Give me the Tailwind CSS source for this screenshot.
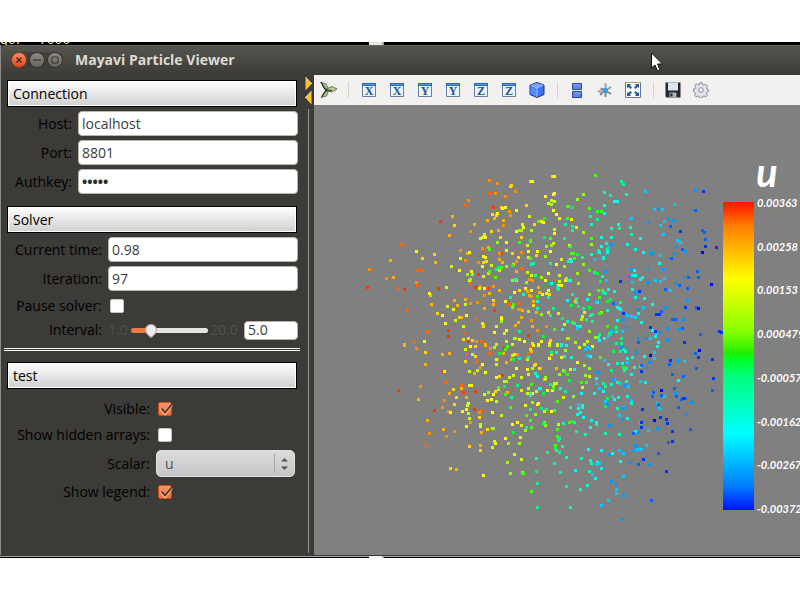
<!DOCTYPE html>
<html lang="en">
<head>
<meta charset="utf-8">
<title>Mayavi Particle Viewer</title>
<script src="https://cdn.jsdelivr.net/npm/@tailwindcss/browser@4"></script>
</head>
<body class="flex h-screen flex-col overflow-hidden bg-white py-[42px] font-['Open_Sans','Noto_Sans',sans-serif] text-sm leading-5 text-black">

<!-- Strip of the terminal behind the window -->
<div class="relative flex h-[3px] shrink-0 items-end overflow-hidden bg-black">
  <span class="h-3 font-['Liberation_Mono',monospace] text-[13px] leading-4 whitespace-pre text-yellow-100">ger  7000</span>
  <span class="absolute left-[369px] h-[3px] w-[15px] border-r-2 border-stone-400 bg-stone-200"></span>
</div>

<main class="flex min-h-0 flex-1 flex-col border-l border-[#8c8b87] bg-[#3c3b37]">
  <header class="flex h-[30px] shrink-0 items-center rounded-tl-md border-t border-[#66645e] bg-linear-to-b from-[#55544e] to-[#3c3b37] pb-0.5 pl-2.5">
    <div class="flex items-center gap-0.5 rounded-full bg-[#3a3935]/60">
      <button aria-label="Close" class="grid size-4 place-items-center rounded-full border border-[#8f3a1c] bg-linear-to-b from-[#f68b63] to-[#dd4814]">
        <svg class="size-2" viewBox="0 0 8 8"><path d="M1.5 1.5l5 5m0-5l-5 5" stroke="#4a2013" stroke-width="1.3"/></svg>
      </button>
      <button aria-label="Minimize" class="grid size-4 place-items-center rounded-full border border-[#33322e] bg-linear-to-b from-[#8d8b83] to-[#65645d]">
        <svg class="size-2" viewBox="0 0 8 8"><path d="M0 4h8" stroke="#35342f" stroke-width="1.2"/></svg>
      </button>
      <button aria-label="Maximize" class="grid size-4 place-items-center rounded-full border border-[#33322e] bg-linear-to-b from-[#8d8b83] to-[#65645d]">
        <svg class="size-2" viewBox="0 0 8 8"><path d="M1 1h6v6H1z" fill="none" stroke="#35342f"/></svg>
      </button>
    </div>
    <h1 class="pl-3 text-sm font-bold text-[#dfdbd2]">Mayavi Particle Viewer</h1>
  </header>

  <div class="flex min-h-0 flex-1">
    <!-- Settings -->
    <form class="flex w-[300px] shrink-0 flex-col pt-[5px]">
      <h2 class="mr-1 ml-1.5 h-[27px] border border-black bg-linear-to-b from-white to-[#cfcfcf] px-[5px] text-sm leading-[26px] shadow-[inset_0_0_0_1px_white]">Connection</h2>
      <div class="mt-1 mr-[3px] grid grid-cols-[71px_1fr] items-center gap-x-1.5 gap-y-1">
        <label for="host" class="text-right">Host:</label>
        <input id="host" value="localhost" class="h-[25px] min-w-0 rounded border border-[#b8b4ae] bg-white px-[3px] text-[#3c3c3c]">
        <label for="port" class="text-right">Port:</label>
        <input id="port" value="8801" class="h-[25px] min-w-0 rounded border border-[#b8b4ae] bg-white px-[3px] text-[#3c3c3c]">
        <label for="key" class="text-right">Authkey:</label>
        <input id="key" type="password" autocomplete="off" value="abcde" class="h-[25px] min-w-0 rounded border border-[#b8b4ae] bg-white px-[3px] font-bold text-[#2c2c2c]">
      </div>
      <h2 class="mt-3 mr-1 ml-1.5 h-[27px] border border-black bg-linear-to-b from-white to-[#cfcfcf] px-[5px] text-sm leading-[26px] shadow-[inset_0_0_0_1px_white]">Solver</h2>
      <div class="mt-1 mr-[3px] grid grid-cols-[101px_1fr] items-center gap-x-1.5 gap-y-1">
        <label for="time" class="text-right">Current time:</label>
        <input id="time" value="0.98" class="h-[25px] min-w-0 rounded border border-[#b8b4ae] bg-white px-[3px] text-[#3c3c3c]">
        <label for="iter" class="text-right">Iteration:</label>
        <input id="iter" value="97" class="h-[25px] min-w-0 rounded border border-[#b8b4ae] bg-white px-[3px] text-[#3c3c3c]">
      </div>
      <div class="mt-1 mr-[3px] grid grid-cols-[101px_1fr] items-center gap-x-1.5">
        <label for="pause" class="leading-[22px] text-right">Pause solver:</label>
        <input id="pause" type="checkbox" class="ml-0.5 size-3.5 appearance-none rounded-xs border border-[#c9c5bf] bg-white">
        <label for="interval" class="leading-[26px] text-right">Interval:</label>
        <div class="flex min-w-0 items-center text-[#52514d]">
          <span class="w-[23px] shrink-0">1.0</span>
          <input id="interval" type="range" min="1" max="20" step="0.1" value="5" class="h-4 w-[77px] shrink-0 appearance-none bg-transparent [&::-webkit-slider-runnable-track]:h-[5px] [&::-webkit-slider-runnable-track]:rounded-full [&::-webkit-slider-runnable-track]:bg-[linear-gradient(to_right,#f07746_24%,#e6e4e1_24%)] [&::-webkit-slider-thumb]:-mt-1 [&::-webkit-slider-thumb]:size-3 [&::-webkit-slider-thumb]:rotate-45 [&::-webkit-slider-thumb]:appearance-none [&::-webkit-slider-thumb]:rounded-[6px_6px_2px_6px] [&::-webkit-slider-thumb]:border [&::-webkit-slider-thumb]:border-[#aaa69f] [&::-webkit-slider-thumb]:bg-[#eeedeb]">
          <span class="w-9 shrink-0 pl-0.5">20.0</span>
          <input aria-label="Interval value" value="5.0" class="h-[19px] w-0 min-w-0 flex-1 rounded border border-[#b8b4ae] bg-white px-[3px] text-[#3c3c3c]">
        </div>
      </div>
      <hr class="mt-[5px] mr-px ml-[3px] h-[3px] border-y border-white">
      <h2 class="mt-[11px] mr-1 ml-1.5 h-[27px] shrink-0 border border-black bg-linear-to-b from-white to-[#cfcfcf] px-[5px] text-sm leading-[26px] shadow-[inset_0_0_0_1px_white]">test</h2>
      <div class="mt-[7px] mr-1.5 grid grid-cols-[149px_1fr] items-center gap-x-1.5">
        <label for="visible" class="leading-[26px] text-right">Visible:</label>
        <span class="relative ml-0.5 size-3.5">
          <input id="visible" type="checkbox" checked class="block size-3.5 appearance-none rounded-xs border border-[#c34c1d] bg-linear-to-b from-[#f79268] to-[#ef6e3c]">
          <svg class="pointer-events-none absolute top-0 left-0 h-3.5 w-4" viewBox="0 0 16 14"><path d="M3 6.5l4 4.5 6.500-8.500" fill="none" stroke="#f9c3a9" stroke-width="3.500"/><path d="M3.500 6.500L7 10.500l7.500-9" fill="none" stroke="#70351f" stroke-width="2"/></svg>
        </span>
        <label for="hidden" class="leading-[26px] text-right">Show hidden arrays:</label>
        <input id="hidden" type="checkbox" class="ml-0.5 size-3.5 appearance-none rounded-xs border border-[#c9c5bf] bg-white">
        <label for="scalar" class="text-right">Scalar:</label>
        <div class="relative my-0.5">
          <select id="scalar" class="block h-[27px] w-full appearance-none rounded-[5px] border border-[#e4e2df] bg-linear-to-b from-[#dcdcdc] to-[#c6c6c6] pl-2 text-[#4c5560]"><option>u</option></select>
          <svg class="pointer-events-none absolute top-1 right-1.5 h-5 w-[15px]" viewBox="0 0 15 20"><path d="M.5 0v19" stroke="#aaa"/><path d="M7 7.500l3.500-3.500 3.500 3.500zM7 12.500l3.500 3.500 3.500-3.500z" fill="#555"/></svg>
        </div>
        <label for="legend" class="leading-[26px] text-right">Show legend:</label>
        <span class="relative ml-0.5 size-3.5">
          <input id="legend" type="checkbox" checked class="block size-3.5 appearance-none rounded-xs border border-[#c34c1d] bg-linear-to-b from-[#f79268] to-[#ef6e3c]">
          <svg class="pointer-events-none absolute top-0 left-0 h-3.5 w-4" viewBox="0 0 16 14"><path d="M3 6.5l4 4.500 6.500-8.500" fill="none" stroke="#f9c3a9" stroke-width="3.500"/><path d="M3.500 6.500L7 10.500l7.500-9" fill="none" stroke="#70351f" stroke-width="2"/></svg>
        </span>
      </div>
    </form>

    <!-- Splitter -->
    <div class="flex w-[13px] shrink-0 flex-col items-center py-0.5 pl-0.5">
      <svg class="h-[28px] w-[7px] shrink-0" viewBox="0 0 7 28"><path d="M.5.500v13l6-6.500z" fill="#fcc232"/><path d="M6.500 14.500v13l-6-6.500z" fill="#fcc232"/><path d="M.5 0l6.500 7M0 21l6.500-7" stroke="#fff3c8" fill="none"/></svg>
      <div class="mt-1 w-px flex-1 bg-[#96958f]"></div>
    </div>

    <!-- Scene -->
    <section class="flex min-w-0 flex-1 flex-col">
      <nav class="flex h-[30px] shrink-0 items-center bg-[#f2f1f0]">
        <button aria-label="Mayavi" class="grid h-7 w-7 place-items-center"><svg class="size-[18px]" viewBox="0 0 18 18"><g fill="#c3cf85" stroke="#3f6350" stroke-width=".8"><path d="M7.500 8L2 1.500l5 1.500 2.500 5z"/><path d="M7.500 8L13 5.500l5 2.500-5 3-5-1z"/><path d="M6.500 9.500l2.500 1.500-1.500 4L2 16.500l2.500-4z"/></g><path d="M2 1l3.500 6.500 2 1.500L3 15.500M7 9l6 .500" fill="none" stroke="#10271f" stroke-width="1.200"/></svg></button>
        <span class="flex w-[13px] justify-center"><i class="h-4 w-px bg-[#d5d3d0]"></i></span>
        <button aria-label="View along +X" class="grid h-7 w-7 place-items-center"><svg class="size-3.5" viewBox="0 0 14 14"><use href="#plate"/><text x="7" y="12" class="font-['Liberation_Serif',serif] text-[12px] font-bold" text-anchor="middle" fill="#285489">X</text></svg></button>
        <button aria-label="View along -X" class="grid h-7 w-7 place-items-center"><svg class="size-3.5" viewBox="0 0 14 14"><use href="#plate"/><text x="7" y="12" class="font-['Liberation_Serif',serif] text-[12px] font-bold" text-anchor="middle" fill="#285489">X</text></svg></button>
        <button aria-label="View along +Y" class="grid h-7 w-7 place-items-center"><svg class="size-3.5" viewBox="0 0 14 14"><use href="#plate"/><text x="7" y="12" class="font-['Liberation_Serif',serif] text-[12px] font-bold" text-anchor="middle" fill="#285489">Y</text></svg></button>
        <button aria-label="View along -Y" class="grid h-7 w-7 place-items-center"><svg class="size-3.5" viewBox="0 0 14 14"><use href="#plate"/><text x="7" y="12" class="font-['Liberation_Serif',serif] text-[12px] font-bold" text-anchor="middle" fill="#285489">Y</text></svg></button>
        <button aria-label="View along +Z" class="grid h-7 w-7 place-items-center"><svg class="size-3.5" viewBox="0 0 14 14"><use href="#plate"/><text x="7" y="12" class="font-['Liberation_Serif',serif] text-[12px] font-bold" text-anchor="middle" fill="#285489">Z</text></svg></button>
        <button aria-label="View along -Z" class="grid h-7 w-7 place-items-center"><svg class="size-3.5" viewBox="0 0 14 14"><use href="#plate"/><text x="7" y="12" class="font-['Liberation_Serif',serif] text-[12px] font-bold" text-anchor="middle" fill="#285489">Z</text></svg></button>
        <button aria-label="Isometric view" class="grid h-7 w-7 place-items-center"><svg class="size-4" viewBox="0 0 16 16"><path d="M8 .5l7 2.500v9.500l-7 3-7-3V3z" fill="#3d74ef" stroke="#142a80"/><path d="M8 1l6.500 2L8 6 1.500 3z" fill="#79a5ff"/><path d="M1.500 3.500L8 6v9l-6.500-3z" fill="#5288fb"/><path d="M1.500 3L8 6l6.500-3M8 6v9" fill="none" stroke="#9bbcff"/></svg></button>
        <span class="flex w-3 justify-center"><i class="h-4 w-px bg-[#d5d3d0]"></i></span>
        <button aria-label="Parallel projection" class="grid h-7 w-7 place-items-center"><svg class="h-4 w-3" viewBox="0 0 12 16"><g fill="#5b87e6" stroke="#2448a8"><path d="M1.500 1.500h9v6h-9zM1.500 9.500h9v6h-9z"/></g><path d="M2.500 3h7M2.500 11h7" stroke="#86a9f2"/></svg></button>
        <button aria-label="Axes" class="grid h-7 w-7 place-items-center"><svg class="size-4" viewBox="0 0 16 16"><path d="M8.500 1.500V15M1 9.500l6-.500M9 8l5-3M3 13l4-4M3.500 6.500L8 8M9 9l5 3" stroke="#85888a" stroke-width="2"/><path d="M8 2v5M2 9h4M10 7l3-2" stroke="#cfd1d1"/><circle cx="8.500" cy="8.500" r="2.500" fill="#269df3"/></svg></button>
        <button aria-label="Full screen" class="grid h-7 w-7 place-items-center"><svg class="size-4" viewBox="0 0 16 16"><path d="M.5.500h15v15H.5z" fill="#fafcfe" stroke="#60779c"/><path d="M0 .5h16" stroke="#b09f55"/><g fill="#285a94"><path d="M2 2h4L5 3.500 7 5.500 5.500 7 3.500 5 2 6zM14 2h-4l1 1.500-2 2L10.500 7l2-2L14 6zM2 14h4l-1-1.500 2-2L5.500 9l-2 2L2 10zM14 14h-4l1-1.500-2-2L10.500 9l2 2 1.500-1z"/></g></svg></button>
        <span class="flex w-3 justify-center"><i class="h-4 w-px bg-[#d5d3d0]"></i></span>
        <button aria-label="Save" class="grid h-7 w-7 place-items-center"><svg class="size-4" viewBox="0 0 16 16"><path d="M.5.500h15v15h-14l-1-1z" fill="#24272f"/><path d="M3 .5h10v8H3z" fill="#dfe5ee"/><path d="M4.500 10.500h7v5h-7z" fill="#aeb3ba"/><path d="M5.500 11.500h2v3h-2z" fill="#22252c"/></svg></button>
        <button aria-label="Configure" class="grid h-7 w-7 place-items-center"><svg class="size-4" viewBox="0 0 16 16"><path d="M6.800.8h2.400l.5 2 1.300.5 1.800-1 1.700 1.700-1 1.800.5 1.300 1.500.5v2l-1.600.7-.5 1.300 1 1.700-1.700 1.600-1.700-1-1.300.6-.5 1.600H6.800l-.6-1.600-1.300-.6-1.700 1-1.600-1.600 1-1.700-.6-1.300L.5 9.300V7.200L2.100 6.700l.6-1.400-1-1.700 1.700-1.600 1.700 1 1.200-.5z" fill="#e4e4ee" stroke="#77798f" stroke-width=".9"/><circle cx="8" cy="8" r="2.300" fill="#f7f7fa" stroke="#82849a"/></svg></button>
      </nav>
      <div class="relative min-h-0 flex-1 overflow-hidden bg-[#808080]">
        <svg id="cloud" class="absolute top-0 left-0 h-[450px] w-[410px]" viewBox="0 0 410 450" shape-rendering="crispEdges" role="img" aria-label="Particles coloured by u"></svg>
        <div class="absolute top-[47px] left-[409px] font-['Lato','Open_Sans',sans-serif] font-bold text-white italic">
          <div class="pl-[33px] text-[40px] leading-10">u</div>
          <div class="flex gap-[3px] pt-2.5">
            <div class="h-[308px] w-[31px] bg-[linear-gradient(to_bottom,#ff1400_0%,#ff8000_8%,#ffff00_25%,#88ff00_42%,#22ee00_49%,#00ff22_51%,#00ff80_57%,#00ffff_75%,#0080ff_92%,#0014ff_100%)]"></div>
            <ol class="-my-2 flex flex-col justify-between text-[11px] leading-[18px]">
              <li>0.00363</li><li>0.00258</li><li>0.00153</li><li>0.000479</li><li>-0.00057</li><li>-0.00162</li><li>-0.00267</li><li>-0.00372</li>
            </ol>
          </div>
        </div>
      </div>
    </section>
  </div>
</main>
<div class="relative h-[3px] shrink-0 border-t border-b border-t-[#3c3b37] border-b-black bg-[#a5a39e]"><span class="absolute top-0 left-[369px] h-0.5 w-[15px] border-r-2 border-stone-400 bg-stone-100"></span></div>

<svg class="pointer-events-none absolute top-[52px] left-[650px] h-5 w-[14px]" viewBox="0 0 14 20"><path d="M1.500 1v15l3.500-3 2.500 6 2.500-1-2.500-6h5z" fill="#fff" stroke="#111"/></svg>

<svg class="absolute size-0"><defs><g id="plate"><path d="M.5.500h13v13H.5z" fill="#e9f5fa" stroke="#6880a0"/><path d="M0 0h14v3H0z" fill="#2467bd"/><path d="M1 1.500h12" stroke="#5c9be4"/></g></defs></svg>

<script>
// Particles by sub-grid cell: a colour key, then x,y pairs in thirds of a pixel.
const colours = {a:'#ff3300',b:'#ff6600',c:'#ff9000',d:'#ffb000',e:'#ffd800',f:'#ffff00',g:'#ccff00',h:'#99ff00',i:'#44ff00',j:'#00ff33',k:'#00ff88',l:'#00ffbb',m:'#00ffee',n:'#00ccff',o:'#0099ff',p:'#0066ff',q:'#0033ff',s:'#0000ff'};
const cells = [
[46,60,`
a 241,169 400,127 424,265 355,328 346,367 235,370 133,373 22,367 383,370 403,436 265,496 265,514 325,529 505,511
b 388,85 316,121 124,238 172,316 184,316 172,361 115,370 142,436 374,256 331,355 295,391 202,499 349,463 313,505 364,529 484,310 448,418 478,415 380,367 367,487 163,529
c 388,46 325,106 412,55 406,85 436,94 466,79 448,139 451,151 430,181 331,199 301,256 367,250 418,265 316,286 355,292 28,313 79,340 169,352 484,262 469,289 361,364 373,391 352,412 400,364 331,415 514,394 475,433 481,433 514,466 532,496 349,529 508,343 517,346
d 277,154 343,178 382,166 403,160 430,166 415,196 268,211 91,286 100,337 226,292 322,265 385,247 418,283 427,292 211,391 214,418 283,406 316,403 292,421 388,385 418,376 373,430 400,418 469,319 502,379 508,391 520,409 487,436 484,457 475,472 466,481 517,484 304,457 370,478 133,538 376,538 538,382 535,367 529,442
e 451,64 454,61 511,49 424,127 499,121 523,178 409,151 397,148 283,181 394,199 421,217 187,280 223,268 484,217 457,265 475,277 529,271 379,289 370,292 385,325 418,316 469,346 478,376 400,406 232,445 298,457 310,523 325,520 337,526 409,538 370,484 505,439 520,421 424,457 461,298
f 517,49 427,130 436,127 412,145 469,136 469,199 490,187 376,217 439,232 169,259 328,262 301,280 370,274 376,277 439,256 505,259 532,259 298,316 334,319 367,304 208,385 328,346 373,370 280,433 247,451 256,475 319,451 193,529 463,382 496,370 514,376 436,409 403,502 439,496 478,523 493,529 535,538 424,461
g 508,154 487,178 373,208 367,217 361,220 502,241 505,277 274,304 394,301 370,334 259,367 358,370 316,418 262,424 286,466 310,484 367,475 409,484 433,505 439,529 463,520 502,322 514,331 517,535 457,538
h 484,196 514,196 412,232 322,328 337,328 331,343 439,304 457,346 499,352 457,427 424,469 466,520 478,196
i 535,169 478,232 511,226 511,230 388,253 511,280 388,319 406,337 424,307 460,418 532,394
j 457,301 415,307
k 451,397 478,499 409,313
l 514,298 520,295 526,331 466,343 490,388 532,430
m 532,409`],
[226,60,`
c 19,484 1,382
e 37,34 31,526 28,388 25,442
f 43,34 43,85 40,88 16,94 40,136 49,148 58,160 4,169 10,172 94,163 43,205 31,259 49,298 25,325 16,346 76,346 64,361 7,388 25,376 4,529 55,361 28,535
g 34,106 25,115 43,109 43,193 40,235 88,241 109,187 64,283 58,331 58,349 19,385 106,409 55,445 127,454 133,442 73,478 91,283 142,529 52,538 82,520 133,538
h 112,103 130,88 34,118 130,202 19,244 34,241 16,274 130,298 73,304 112,325 4,337 79,340 115,355 148,388 124,463 4,448 148,499 106,532 85,520 166,517 184,442 97,265 154,238
i 166,31 148,130 172,139 184,139 82,124 85,124 82,160 31,220 154,220 94,265 100,265 103,280 148,316 175,376 187,376 178,445 43,493 97,472 202,484 178,397 208,505
j 13,160 97,127 13,217 112,268 172,325 181,349 94,421 115,424 148,427 67,460 10,514 211,403 226,487 202,409
k 172,163 152,154 211,91 76,178 97,184 97,196 73,220 91,244 127,277 31,295 163,322 52,367 55,373 97,388 109,400 40,430 130,430 157,448 139,463 31,451 157,469 178,508 229,487 229,499 244,519 244,535 229,535 250,58 244,49 175,256 241,412 25,397 238,190
l 193,82 259,88 154,178 193,121 214,190 199,235 202,253 154,268 190,277 85,289 94,286 187,334 277,373 271,187 274,208 190,382 85,346 82,469 103,475 151,451 112,484 121,484 202,436 196,385 277,331
m 223,109 232,109 193,145 235,178 184,217 214,217 184,244 202,262 262,238 286,253 310,262 301,220 178,262 190,280 94,289 91,346 34,355 82,406 109,412 142,403 205,373 172,412 238,430 283,316 286,331 301,343 307,337 286,397 313,400 232,466 223,379 67,493 175,517 64,538 193,520 178,526 304,472 295,445 337,418 232,427 241,433 337,496 346,514 355,532 358,295
n 316,79 343,133 367,133 274,160 361,181 373,169 403,118 370,208 361,271 412,226 421,232 205,247 163,283 199,346 277,352 346,346 373,340 361,349 391,376 310,427 169,409 112,490 274,454 286,457 262,451 214,499 247,499 205,514 349,505 331,520 211,508
o 466,76 355,130 325,172 400,166 385,160 214,238 334,265 409,244 403,265 436,259 325,313 370,313 322,352 433,337 409,355 196,319 274,313 268,334 286,382 376,427 295,433 250,463 259,487 295,520 319,520 361,502 382,490 382,523 418,493 442,406 430,463
p 466,136 391,184 487,196 493,202 496,223 427,253 394,280 472,319 445,337 475,337 418,361 442,370 376,373 220,415 364,439 397,463 406,463 427,490 469,427 481,508 295,532
q 490,79 421,199 496,244 529,247 241,349 298,379 250,445 349,448 358,448 436,427 331,487 346,499 433,532 538,499 545,502
s 487,262 514,358 475,430`],
[46,240,`
a 250,79 115,136 346,139 310,142 343,193 223,196 427,91 433,10
b 319,28 349,46 349,52 256,112 304,121 364,196 388,25 505,25 514,4 199,301
c 169,10 181,124 253,166 247,187 265,199 283,259 259,274 208,265 391,10 361,67 331,232 358,202 472,28 412,43
d 133,0 196,58 247,28 268,25 175,163 268,145 304,130 319,157 202,226 250,253 289,373 364,262 361,301 343,85 376,0 439,52 430,25 514,19 454,43 442,142
e 196,22 316,49 280,133 289,157 283,178 271,370 328,304 361,316 358,217 382,253 346,4 346,34 418,94 406,139 415,133 457,31 511,13 526,58 523,61 538,70
f 331,4 253,79 367,58 376,82 328,121 334,121 325,175 307,199 271,202 319,193 319,244 370,391 409,97 382,166 394,163 400,148 397,202 457,238 472,232 436,280 406,295 520,1 469,70 502,73 496,181 517,145 535,175 532,178 535,0
g 316,13 337,28 328,79 352,76 322,181 325,205 328,220 361,238 361,244 373,148 409,169 424,211 397,250 397,307 403,289 481,277 463,328 484,343 484,241 409,58 409,43 433,109 448,97 460,91 484,97 505,88 484,136 502,145 505,130 529,139 463,28 502,43
h 403,7 400,250 385,142 439,109 445,295 478,295 442,352 451,385 517,70 526,208 496,256 517,172 487,382
i 442,4 436,13 415,127 436,148 451,187 499,211 511,226 514,247 514,118 490,385 514,439
j 418,25 460,43 433,124 460,262 529,379
k 478,40 454,157 472,121 511,193 499,247 532,415 532,487
l 505,37 526,85 511,151 529,340
m 532,94 538,130 511,145`],
[226,240,`
d 1,70 13,103 49,70
e 34,28
f 28,40 64,37 16,100 22,136 112,52 34,199 37,136 157,4
g 28,1 52,1 118,7 91,73 49,115 43,115 127,127 70,157 13,199 55,238 148,94
h 133,61 76,16 58,88 70,76 16,97 40,124 136,91 100,154 16,241 148,70 13,232
i 181,37 73,79 82,88 139,112 124,112 40,130 52,169 88,232 52,253 52,274 46,301
j 220,19 10,145 88,106 250,67 202,160 196,184 46,310 97,229 10,235
k 34,22 250,13 241,19 214,76 31,118 76,139 4,190 19,193 103,232 58,280 55,286 22,322 58,322 109,259 169,238 43,355 61,382 79,424 196,124 190,115 259,70
l 49,22 94,37 232,55 253,76 61,130 43,196 91,187 70,235 79,337 124,340 49,316 67,304 196,265 136,268 151,346 148,379 121,433 154,355 91,487 232,190 214,118 259,109 274,175 1,130 232,112 238,268
m 64,1 79,1 73,34 151,34 247,55 256,19 262,40 277,37 205,58 103,73 169,100 274,88 283,67 313,34 301,64 316,112 124,145 163,145 190,139 127,181 127,187 115,190 121,202 112,208 130,217 154,226 151,247 169,232 145,313 184,316 172,352 184,370 106,376 142,421 217,325 241,349 262,220 262,154 235,157 223,163 415,106 352,4 286,259 166,400
n 142,7 136,13 142,31 151,10 193,46 262,52 223,103 241,115 265,124 217,154 178,130 169,115 115,178 196,169 274,166 250,187 238,211 301,109 343,22 343,40 433,49 373,154 352,175 358,190 325,256 304,313 292,313 319,301 238,316 250,325 169,358 178,355 157,388 184,481 205,466 229,433 229,445 250,394 301,235
o 247,4 244,7 289,19 289,25 172,82 220,103 256,121 202,178 250,190 247,223 208,241 352,250 412,46 319,67 328,52 406,145 454,172 439,208 295,262 280,316 286,301 328,358 271,352 208,328 214,409 229,418 250,451 247,523
p 466,25 388,58 469,70 397,88 430,94 403,130 340,142 337,154 364,151 409,154 424,163 436,160 415,187 355,178 280,265 304,61 451,253 385,292 355,325 295,358 334,466 517,136
q 391,46 304,79 517,43 520,100 430,160 307,193 361,217 379,223 382,235 304,232 304,247 397,259 397,289 379,379 310,343 475,37
s 331,31 478,16 364,136 343,226`]
];
const svg = document.getElementById('cloud');
const paths = {};
for (const [ox, oy, text] of cells)
  for (const line of text.trim().split('\n')) {
    const [key, ...points] = line.trim().split(' ');
    for (const p of points) {
      const [x, y] = p.split(',').map(v => Math.floor(v / 3) - 1);
      paths[key] = (paths[key] || '') + `M${ox + x} ${oy + y}h3v3h-3z`;
    }
  }
for (const key in paths) {
  const el = document.createElementNS('http://www.w3.org/2000/svg', 'path');
  el.setAttribute('d', paths[key]);
  el.setAttribute('fill', colours[key]);
  svg.append(el);
}
</script>
</body>
</html>
